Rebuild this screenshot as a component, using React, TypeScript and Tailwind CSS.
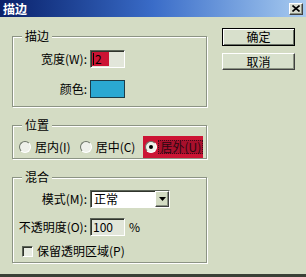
import React from "react";

const raised =
  "border border-t-white border-l-white border-b-[#404040] border-r-[#404040] shadow-[inset_-1px_-1px_0_#8a9282]";
const sunken =
  "border border-t-[#5c6458] border-l-[#5c6458] border-b-white border-r-white shadow-[inset_1px_1px_0_#30342c]";

function Group({
  title,
  className,
  children,
}: {
  title: string;
  className?: string;
  children: React.ReactNode;
}) {
  return (
    <fieldset
      className={`border border-[#8c9484] shadow-[inset_1px_1px_0_#fff,1px_1px_0_#fff] ${className ?? ""}`}
    >
      <legend className="ml-[9px] bg-[#d4dcc4] px-[3px] leading-[12px]">{title}</legend>
      {children}
    </fieldset>
  );
}

function Radio({ checked }: { checked?: boolean }) {
  return (
    <span className="flex h-[12px] w-[12px] shrink-0 items-center justify-center rounded-full border border-t-[#6c7468] border-l-[#6c7468] border-b-white border-r-white bg-[#eef0ea]">
      {checked && <span className="h-[4px] w-[4px] rounded-full bg-black" />}
    </span>
  );
}

export default function App() {
  return (
    <div className="flex h-[277px] w-[306px] flex-col border-b-[3px] border-[#3a4036] bg-[#d4dcc4] font-['Noto_Sans_CJK_SC','Noto_Sans',sans-serif] text-[12px] leading-[12px] whitespace-nowrap text-black">
      {/* Title bar */}
      <div className="flex h-[17px] items-center justify-between bg-gradient-to-r from-[#0a206a] via-[#3a6cc8] to-[#a8cbef] pl-[3px] pr-[3px]">
        <span className="font-bold text-white">描边</span>
        <span className={`flex h-[12px] w-[14px] items-center justify-center bg-[#d8dcd0] ${raised}`}>
          <svg width="8" height="7" viewBox="0 0 8 7">
            <path d="M0.5 0.5 L7.5 6.5 M7.5 0.5 L0.5 6.5" stroke="#000" strokeWidth="1.6" />
          </svg>
        </span>
      </div>

      <div className="flex flex-1 pl-[12px]">
        <div className="flex w-[195px] flex-col">
          {/* 描边 */}
          <Group title="描边" className="mt-[13px] pb-[8px]">
            <div className="mt-[8px] flex h-[18px] items-center">
              <span className="w-[74px] text-right">宽度(W):</span>
              <div className={`ml-[3px] flex h-[18px] w-[35px] bg-[#e2e6da] p-px ${sunken}`}>
                <div className="flex w-[17px] items-center bg-[#cc1434] pl-[1px]">
                  <span className="border-l border-black pl-px leading-[12px]">2</span>
                </div>
              </div>
            </div>
            <div className="mt-[12px] flex h-[18px] items-center">
              <span className="w-[74px] text-right">颜色:</span>
              <div className="ml-[3px] h-[18px] w-[35px] border border-[#1c3c48] bg-[#2aa8d2]" />
            </div>
          </Group>

          {/* 位置 */}
          <Group title="位置" className="mt-[12px]">
            <div className="mt-[5px] flex h-[22px] items-center pl-[6px]">
              <Radio />
              <span className="ml-[4px]">居内(I)</span>
              <span className="ml-[9px]">
                <Radio />
              </span>
              <span className="ml-[4px]">居中(C)</span>
              <div className="ml-[8px] flex h-[22px] w-[60px] items-center bg-[#cc1434] pl-[2px]">
                <Radio checked />
                <span className="ml-[1px] border border-dotted border-[#400818] bg-[#a8102c] px-px leading-[12px] text-[#2a0810]">
                  居外(U)
                </span>
              </div>
            </div>
          </Group>

          {/* 混合 */}
          <Group title="混合" className="mt-[12px] pb-[5px]">
            <div className="mt-[7px] flex h-[18px] items-center">
              <span className="w-[74px] text-right">模式(M):</span>
              <div className={`ml-[3px] flex h-[18px] w-[80px] items-center justify-between bg-white ${sunken}`}>
                <span className="pl-[3px]">正常</span>
                <span className={`flex h-[16px] w-[14px] items-center justify-center bg-[#d4dcc4] ${raised}`}>
                  <svg width="7" height="4" viewBox="0 0 7 4">
                    <path d="M0 0 H7 L3.5 4 Z" fill="#000" />
                  </svg>
                </span>
              </div>
            </div>
            <div className="mt-[10px] flex h-[18px] items-center">
              <span className="w-[74px] text-right">不透明度(O):</span>
              <div className={`ml-[3px] flex h-[18px] w-[35px] items-center bg-[#e2e6da] pl-[2px] ${sunken}`}>
                100
              </div>
              <span className="ml-[4px]">%</span>
            </div>
            <div className="mt-[9px] flex h-[12px] items-center pl-[9px]">
              <span className={`h-[11px] w-[11px] bg-[#e8ece2] ${sunken}`} />
              <span className="ml-[4px]">保留透明区域(P)</span>
            </div>
          </Group>
        </div>

        {/* Buttons */}
        <div className="ml-[15px] flex w-[73px] flex-col">
          <button className="mt-[11px] h-[18px] w-[73px] border border-black bg-[#d8e0cc] leading-[12px] shadow-[inset_1px_1px_0_#fff,inset_-1px_-1px_0_#6c7468]">
            确定
          </button>
          <button className={`mt-[7px] h-[17px] w-[73px] bg-[#d8e0cc] leading-[12px] ${raised}`}>
            取消
          </button>
        </div>
      </div>
    </div>
  );
}
